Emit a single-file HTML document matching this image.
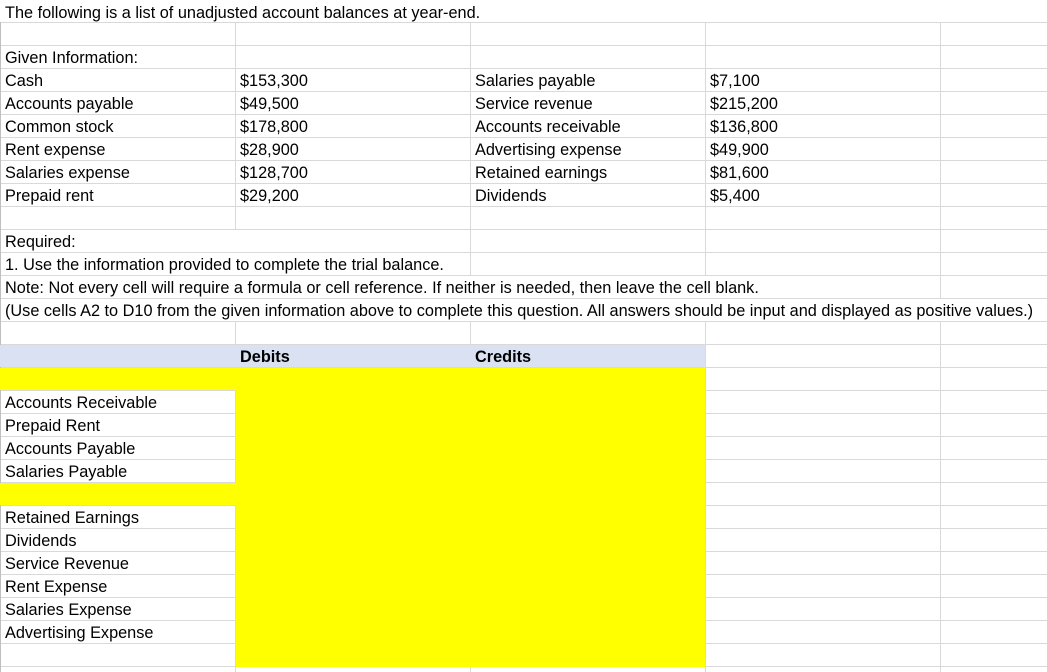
<!DOCTYPE html>
<html><head><meta charset="utf-8"><style>
body{margin:0;width:1047px;height:672px;overflow:hidden;background:#fff;position:relative;font-family:"Liberation Sans",sans-serif;font-size:16.3px;color:#000}
.h{position:absolute;left:0;width:1047px;height:1px;background:#d9d9d9}
.v{position:absolute;width:1px;background:#d9d9d9}
.r{position:absolute}
.t{position:absolute;white-space:nowrap;line-height:22px;height:22px;padding-left:5px;margin-top:2px}
.b{font-weight:bold}
</style></head><body>
<div class="h" style="top:22px"></div><div class="h" style="top:45px"></div><div class="h" style="top:68px"></div><div class="h" style="top:91px"></div><div class="h" style="top:114px"></div><div class="h" style="top:137px"></div><div class="h" style="top:160px"></div><div class="h" style="top:183px"></div><div class="h" style="top:206px"></div><div class="h" style="top:229px"></div><div class="h" style="top:252px"></div><div class="h" style="top:275px"></div><div class="h" style="top:298px"></div><div class="h" style="top:321px"></div><div class="h" style="top:344px"></div><div class="h" style="top:367px"></div><div class="h" style="top:390px"></div><div class="h" style="top:413px"></div><div class="h" style="top:436px"></div><div class="h" style="top:459px"></div><div class="h" style="top:482px"></div><div class="h" style="top:505px"></div><div class="h" style="top:528px"></div><div class="h" style="top:551px"></div><div class="h" style="top:574px"></div><div class="h" style="top:597px"></div><div class="h" style="top:620px"></div><div class="h" style="top:643px"></div><div class="h" style="top:666px"></div>
<div class="v" style="left:235px;top:22px;height:207px"></div>
<div class="v" style="left:235px;top:321px;height:351px"></div>
<div class="v" style="left:470px;top:22px;height:253px"></div>
<div class="v" style="left:470px;top:321px;height:351px"></div>
<div class="v" style="left:705px;top:22px;height:253px"></div>
<div class="v" style="left:705px;top:321px;height:351px"></div>
<div class="v" style="left:940px;top:22px;height:276px"></div>
<div class="v" style="left:940px;top:321px;height:351px"></div>
<div class="v" style="left:0;top:22px;height:650px;background:#bfbfbf"></div>
<div class="r" style="left:0;top:345px;width:705px;height:22px;background:#d9e1f2"></div>
<div class="r" style="left:0;top:368px;width:705px;height:22px;background:#ffff00"></div>
<div class="r" style="left:236px;top:390px;width:469px;height:277px;background:#ffff00"></div>
<div class="r" style="left:0;top:483px;width:236px;height:22px;background:#ffff00"></div>

<div class="t" style="top:0;left:0">The following is a list of unadjusted account balances at year-end.</div>
<div class="t" style="top:45px;left:0">Given Information:</div>
<div class="t" style="top:68px;left:0">Cash</div><div class="t" style="top:68px;left:235px">$153,300</div><div class="t" style="top:68px;left:470px">Salaries payable</div><div class="t" style="top:68px;left:705px">$7,100</div>
<div class="t" style="top:91px;left:0">Accounts payable</div><div class="t" style="top:91px;left:235px">$49,500</div><div class="t" style="top:91px;left:470px">Service revenue</div><div class="t" style="top:91px;left:705px">$215,200</div>
<div class="t" style="top:114px;left:0">Common stock</div><div class="t" style="top:114px;left:235px">$178,800</div><div class="t" style="top:114px;left:470px">Accounts receivable</div><div class="t" style="top:114px;left:705px">$136,800</div>
<div class="t" style="top:137px;left:0">Rent expense</div><div class="t" style="top:137px;left:235px">$28,900</div><div class="t" style="top:137px;left:470px">Advertising expense</div><div class="t" style="top:137px;left:705px">$49,900</div>
<div class="t" style="top:160px;left:0">Salaries expense</div><div class="t" style="top:160px;left:235px">$128,700</div><div class="t" style="top:160px;left:470px">Retained earnings</div><div class="t" style="top:160px;left:705px">$81,600</div>
<div class="t" style="top:183px;left:0">Prepaid rent</div><div class="t" style="top:183px;left:235px">$29,200</div><div class="t" style="top:183px;left:470px">Dividends</div><div class="t" style="top:183px;left:705px">$5,400</div>
<div class="t" style="top:229px;left:0">Required:</div>
<div class="t" style="top:252px;left:0">1. Use the information provided to complete the trial balance.</div>
<div class="t" style="top:275px;left:0">Note: Not every cell will require a formula or cell reference. If neither is needed, then leave the cell blank.</div>
<div class="t" style="top:298px;left:0">(Use cells A2 to D10 from the given information above to complete this question. All answers should be input and displayed as positive values.)</div>
<div class="t b" style="top:344px;left:235px">Debits</div><div class="t b" style="top:344px;left:470px">Credits</div>
<div class="t" style="top:390px;left:0">Accounts Receivable</div>
<div class="t" style="top:413px;left:0">Prepaid Rent</div>
<div class="t" style="top:436px;left:0">Accounts Payable</div>
<div class="t" style="top:459px;left:0">Salaries Payable</div>
<div class="t" style="top:505px;left:0">Retained Earnings</div>
<div class="t" style="top:528px;left:0">Dividends</div>
<div class="t" style="top:551px;left:0">Service Revenue</div>
<div class="t" style="top:574px;left:0">Rent Expense</div>
<div class="t" style="top:597px;left:0">Salaries Expense</div>
<div class="t" style="top:620px;left:0">Advertising Expense</div>
</body></html>
